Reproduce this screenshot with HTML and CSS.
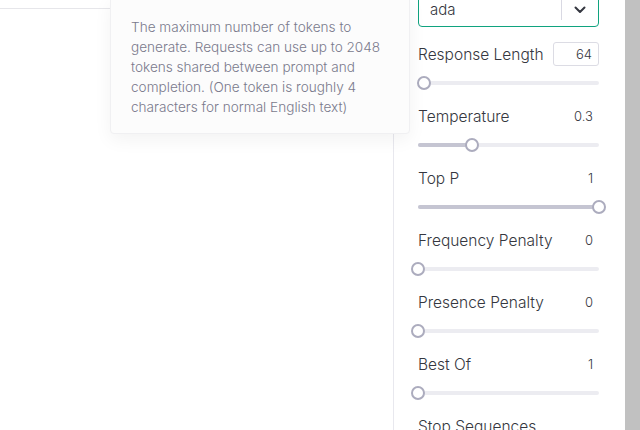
FILE: index.html
```html
<!DOCTYPE html>
<html>
<head>
<meta charset="utf-8">
<link rel="stylesheet" href="styles.css">
</head>
<body>
<div class="app">
  <div class="main">
    <div class="editor"></div>
    <div class="tooltip">The maximum number of tokens to<br>generate. Requests can use up to 2048<br>tokens shared between prompt and<br>completion. (One token is roughly 4<br>characters for normal English text)</div>
  </div>
  <div class="panel">
    <div class="panel-inner">
      <div class="select">
        <span class="select-value">ada</span>
        <span class="select-sep"></span>
        <svg class="chevron" width="12" height="8" viewBox="0 0 12 8"><path d="M1.5 1.5 L6 6 L10.5 1.5" fill="none" stroke="#353740" stroke-width="2" stroke-linecap="round" stroke-linejoin="round"/></svg>
      </div>

      <div class="param">
        <div class="param-head"><span class="label">Response Length</span><span class="value boxed">64</span></div>
        <div class="slider"><div class="fill" style="width:6px"></div><div class="thumb" style="left:6px"></div></div>
      </div>
      <div class="param">
        <div class="param-head"><span class="label">Temperature</span><span class="value">0.3</span></div>
        <div class="slider"><div class="fill" style="width:54px"></div><div class="thumb" style="left:54px"></div></div>
      </div>
      <div class="param">
        <div class="param-head"><span class="label">Top P</span><span class="value">1</span></div>
        <div class="slider"><div class="fill" style="width:181px"></div><div class="thumb" style="left:181px"></div></div>
      </div>
      <div class="param">
        <div class="param-head"><span class="label">Frequency Penalty</span><span class="value">0</span></div>
        <div class="slider"><div class="thumb" style="left:0px"></div></div>
      </div>
      <div class="param">
        <div class="param-head"><span class="label">Presence Penalty</span><span class="value">0</span></div>
        <div class="slider"><div class="thumb" style="left:0px"></div></div>
      </div>
      <div class="param">
        <div class="param-head"><span class="label">Best Of</span><span class="value">1</span></div>
        <div class="slider"><div class="thumb" style="left:0px"></div></div>
      </div>
      <div class="param">
        <div class="param-head"><span class="label">Stop Sequences</span></div>
      </div>
    </div>
  </div>
  <div class="scrollbar"></div>
</div>
</body>
</html>
```
FILE: styles.css
```css
html, body {
  margin: 0;
  padding: 0;
  width: 640px;
  height: 430px;
  overflow: hidden;
  background: #ffffff;
  font-family: "Inter", "Roboto", sans-serif;
  font-weight: 300;
  color: #353740;
}
.app {
  display: flex;
  width: 640px;
  height: 430px;
}
.main {
  position: relative;
  width: 393px;
  flex: none;
  background: #ffffff;
}
.editor {
  margin-top: 8px;
  border-top: 1px solid #e6e6ea;
}
.tooltip {
  position: absolute;
  left: 110px;
  top: -4px;
  width: 258px;
  padding: 20px 20px 16px 20px;
  background: #fcfcfc;
  border: 1px solid #f0f0f2;
  border-radius: 4px;
  box-shadow: 0 6px 18px rgba(0, 0, 0, 0.05);
  font-size: 13.6px;
  line-height: 20px;
  color: #7a7a8c;
  white-space: nowrap;
  z-index: 2;
}
.panel {
  box-sizing: border-box;
  width: 232px;
  flex: none;
  border-left: 1px solid #e8e8ee;
  padding: 0 26px 0 24px;
  background: #ffffff;
  overflow: hidden;
}
.panel-inner {
  margin-top: -9px;
}
.select {
  height: 34px;
  border: 1px solid #10a37f;
  border-radius: 4px;
  display: flex;
  align-items: center;
  padding-left: 11px;
  padding-right: 12px;
  margin-bottom: 15px;
}
.select-value {
  flex: 1;
  font-size: 15px;
  color: #353740;
}
.select-sep {
  width: 1px;
  height: 20px;
  margin-top: 2px;
  background: #d9d9e3;
  margin-right: 12px;
}
.chevron {
  display: block;
  margin-top: 1px;
}
.param {
  height: 62px;
}
.param-head {
  height: 24px;
  display: flex;
  align-items: center;
  justify-content: space-between;
}
.label {
  font-size: 15.5px;
  color: #353740;
  white-space: nowrap;
}
.value {
  flex: none;
  font-size: 13px;
  text-align: right;
  padding-right: 6px;
  color: #353740;
  white-space: nowrap;
}
.value.boxed {
  box-sizing: border-box;
  width: 46px;
  height: 24px;
  line-height: 22px;
  border: 1px solid #dcdce4;
  border-radius: 3px;
}
.slider {
  position: relative;
  height: 4px;
  margin-top: 15px;
  border-radius: 2px;
  background: #ececf1;
}
.fill {
  height: 4px;
  border-radius: 2px;
  background: #c5c5d2;
}
.thumb {
  position: absolute;
  top: -5px;
  width: 10px;
  height: 10px;
  margin-left: -7px;
  border: 2px solid #acacbe;
  border-radius: 50%;
  background: #ffffff;
}
.scrollbar {
  width: 15px;
  flex: none;
  background: #c1c1c1;
}
```
